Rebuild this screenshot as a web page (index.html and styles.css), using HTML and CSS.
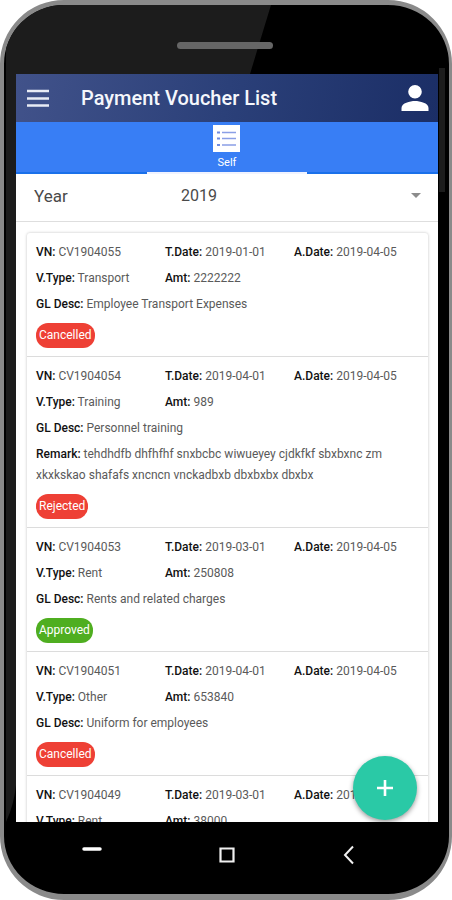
FILE: index.html
```html
<!DOCTYPE html>
<html lang="en">
<head>
<meta charset="utf-8">
<meta name="viewport" content="width=device-width, initial-scale=1">
<title>Payment Voucher List</title>
<link rel="stylesheet" href="styles.css">
</head>
<body>
<div class="phone">
  <svg class="glare" viewBox="0 0 270 822" preserveAspectRatio="none" aria-hidden="true"><path d="M2 0H267L246 69L12 69V780Q10 800 2 817Z"/></svg>
  <div class="side-key"></div>
  <div class="earpiece"><span class="speaker"></span></div>

  <div class="screen">
    <header class="app-bar">
      <button class="icon-button" type="button" aria-label="Menu">
        <svg width="22" height="18" viewBox="0 0 22 18"><path d="M0 2H22M0 9.500H22M0 16.500H22" stroke="#e8ebf5" stroke-width="2.400"/></svg>
      </button>
      <h1 class="title">Payment Voucher List</h1>
      <button class="icon-button" type="button" aria-label="Profile">
        <svg width="28" height="28" viewBox="0 0 28 28"><path fill="#fff" d="M14 1a6.800 6.800 0 1 1 0 13.600a6.800 6.800 0 0 1 0-13.600zM14 17c5 0 13.500 2 13.500 7V27H.5V24C.5 19 9 17 14 17z"/></svg>
      </button>
    </header>

    <nav class="tabs">
      <a class="tab" href="#self">
        <svg width="27" height="27" viewBox="0 0 27 27"><path fill="#fff" d="M0 0H27V27H0z"/><path d="M9 7.500H23M9 13.500H23M9 20H23" stroke="#8a9fe6" stroke-width="1.500"/><path d="M4 7.500H7M4 13.500H7M4 20H7" stroke="#6f8be0" stroke-width="2"/></svg>
        <span>Self</span>
      </a>
    </nav>

    <div class="filter">
      <label for="year">Year</label>
      <select id="year" class="year"><option>2019</option></select>
      <svg class="caret" width="10" height="5" viewBox="0 0 10 5" aria-hidden="true"><path fill="#8c8c8c" d="M0 0H10L5 5z"/></svg>
    </div>

    <main class="content">
      <ul class="card" id="self">
        <li class="voucher">
          <div class="row"><span><b>VN:</b> CV1904055</span><span><b>T.Date:</b> 2019-01-01</span><span><b>A.Date:</b> 2019-04-05</span></div>
          <div class="row"><span><b>V.Type:</b> Transport</span><span><b>Amt:</b> 2222222</span></div>
          <p><b>GL Desc:</b> Employee Transport Expenses</p>
          <span class="badge">Cancelled</span>
        </li>
        <li class="voucher">
          <div class="row"><span><b>VN:</b> CV1904054</span><span><b>T.Date:</b> 2019-04-01</span><span><b>A.Date:</b> 2019-04-05</span></div>
          <div class="row"><span><b>V.Type:</b> Training</span><span><b>Amt:</b> 989</span></div>
          <p><b>GL Desc:</b> Personnel training</p>
          <p><b>Remark:</b> tehdhdfb dhfhfhf snxbcbc wiwueyey cjdkfkf sbxbxnc zm xkxkskao shafafs xncncn vnckadbxb dbxbxbx dbxbx</p>
          <span class="badge">Rejected</span>
        </li>
        <li class="voucher">
          <div class="row"><span><b>VN:</b> CV1904053</span><span><b>T.Date:</b> 2019-03-01</span><span><b>A.Date:</b> 2019-04-05</span></div>
          <div class="row"><span><b>V.Type:</b> Rent</span><span><b>Amt:</b> 250808</span></div>
          <p><b>GL Desc:</b> Rents and related charges</p>
          <span class="badge approved">Approved</span>
        </li>
        <li class="voucher">
          <div class="row"><span><b>VN:</b> CV1904051</span><span><b>T.Date:</b> 2019-04-01</span><span><b>A.Date:</b> 2019-04-05</span></div>
          <div class="row"><span><b>V.Type:</b> Other</span><span><b>Amt:</b> 653840</span></div>
          <p><b>GL Desc:</b> Uniform for employees</p>
          <span class="badge">Cancelled</span>
        </li>
        <li class="voucher">
          <div class="row"><span><b>VN:</b> CV1904049</span><span><b>T.Date:</b> 2019-03-01</span><span><b>A.Date:</b> 2019-04-05</span></div>
          <div class="row"><span><b>V.Type:</b> Rent</span><span><b>Amt:</b> 38000</span></div>
        </li>
      </ul>
    </main>

    <button class="fab" type="button" aria-label="Add voucher">
      <svg width="16" height="16" viewBox="0 0 16 16"><path d="M8 0V16M0 8H16" stroke="#fff" stroke-width="2.600"/></svg>
    </button>
  </div>

  <div class="nav-keys">
    <button class="key" type="button" aria-label="Recent"><svg width="20" height="20" viewBox="0 0 20 20"><path d="M2 4H18" stroke="#fff" stroke-width="3.500" stroke-linecap="round"/></svg></button>
    <button class="key" type="button" aria-label="Home"><svg width="20" height="20" viewBox="0 0 20 20"><path d="M3.500 3.500H16.500V16.500H3.500z" fill="none" stroke="#f0f0f0" stroke-width="2.200"/></svg></button>
    <button class="key" type="button" aria-label="Back"><svg width="20" height="20" viewBox="0 0 20 20"><path d="M14 1.500L6 10L14 18.500" fill="none" stroke="#f0f0f0" stroke-width="2"/></svg></button>
  </div>
</div>
</body>
</html>
```
FILE: styles.css
```css
* { box-sizing: border-box; }
body {
  margin: 0;
  background: #fff;
  font-family: Roboto, "Liberation Sans", sans-serif;
}
button { border: 0; padding: 0; background: none; cursor: pointer; }
svg { display: block; }

.phone {
  position: relative;
  display: flex;
  flex-direction: column;
  height: 100vh;
  padding: 0 11px 0 12px;
  border: solid #8a8a8a;
  border-width: 5px 3px 6px 4px;
  border-radius: 64px;
  background: #000;
  overflow: hidden;
}
.glare {
  position: absolute;
  top: 0;
  left: 0;
  width: 270px;
  height: 822px;
  fill: #1c1c1c;
}
.side-key {
  position: absolute;
  top: 63px;
  right: 4px;
  width: 6px;
  height: 124px;
  background: #1c1c1c;
}
.earpiece {
  position: relative;
  flex: none;
  display: flex;
  justify-content: center;
  align-items: center;
  height: 69px;
  padding: 12px 4px 0 0;
}
.speaker {
  width: 96px;
  height: 7px;
  border-radius: 4px;
  background: #666;
}

.screen {
  position: relative;
  flex: 1;
  min-height: 0;
  display: flex;
  flex-direction: column;
  background: #fff;
  overflow: hidden;
}
.app-bar {
  flex: none;
  display: flex;
  align-items: center;
  height: 48px;
  padding: 0 9px 0 11px;
  background: linear-gradient(100deg, #41528a 0%, #2b4079 50%, #1b2e66 100%);
}
.title {
  flex: 1;
  margin: 0 0 0 32px;
  font-size: 20px;
  font-weight: 500;
  line-height: 24px;
  color: #f5f7fc;
}
.tabs {
  flex: none;
  display: flex;
  justify-content: center;
  height: 52px;
  background: #387ef5;
  box-shadow: inset 0 -2px #1a70ea;
}
.tab {
  display: flex;
  flex-direction: column;
  align-items: center;
  gap: 3px;
  width: 38%;
  padding-top: 3px;
  border-bottom: 2px solid #f0f3ff;
  color: #fff;
  font-size: 11px;
  line-height: 16px;
  text-decoration: none;
}
.filter {
  position: relative;
  flex: none;
  display: flex;
  align-items: center;
  height: 48px;
  padding: 0 17px 4px 18px;
  border-bottom: 1px solid #dedede;
  color: #4a4a4a;
  font-size: 17px;
}
.filter label { width: 147px; }
.year {
  flex: 1;
  appearance: none;
  border: 0;
  padding: 0;
  background: transparent;
  color: inherit;
  font: inherit;
  font-size: 16px;
}
.caret { flex: none; }

.content {
  flex: 1;
  min-height: 0;
  padding: 11px 10px 0 11px;
  overflow: hidden;
}
.card {
  margin: 0;
  padding: 0;
  list-style: none;
  border-radius: 3px;
  box-shadow: 0 0 3px rgba(0, 0, 0, 0.25);
}
.voucher {
  display: flex;
  flex-direction: column;
  gap: 5px;
  padding: 9px 5px 8px 9px;
  border-bottom: 1px solid #dcdcdc;
  color: #5a5a5a;
  font-size: 12px;
  line-height: 21px;
}
.voucher p { margin: 0; }
.voucher b { color: #111; font-weight: 500; }
.row {
  display: grid;
  grid-template-columns: repeat(3, 1fr);
  white-space: nowrap;
}
.badge {
  align-self: flex-start;
  margin-top: 3px;
  padding: 0 3px;
  border-radius: 12px;
  background: #ee4035;
  color: #fff;
  font-size: 12px;
  font-weight: 400;
  line-height: 25px;
}
.approved { background: #4fae20; }

.fab {
  position: absolute;
  right: 21px;
  bottom: 2px;
  display: flex;
  justify-content: center;
  align-items: center;
  width: 64px;
  height: 64px;
  border-radius: 50%;
  background: #2ac9a6;
  box-shadow: 0 2px 5px rgba(0, 0, 0, 0.4);
}

.nav-keys {
  flex: none;
  display: grid;
  grid-template-columns: 36% 28% 30%;
  justify-items: center;
  height: 72px;
  padding-top: 23px;
}
.key { height: 20px; }
```
